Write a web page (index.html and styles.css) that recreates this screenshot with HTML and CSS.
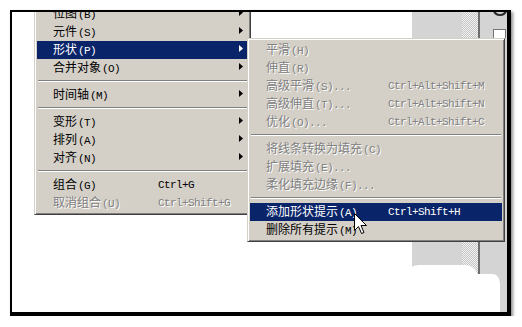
FILE: index.html
```html
<!DOCTYPE html>
<html lang="zh-CN">
<head>
<meta charset="utf-8">
<title>形状菜单</title>
<link rel="stylesheet" href="styles.css">
</head>
<body>
<div class="frame">
  <div class="stage">
    <div class="canvas"></div>
    <div class="panel">
      <div class="panel-gray"></div>
      <div class="panel-checker"></div>
      <div class="panel-line"></div>
      <div class="panel-gray rest"></div>
    </div>

    <svg class="tool-icon" width="16" height="26" viewBox="0 0 16 26">
      <path d="M2,-2 A6,5 0 0 0 14,-2" fill="none" stroke="#2a2a2a" stroke-width="2.2"/>
      <rect x="1.5" y="17.5" width="12" height="10" fill="#fff" stroke="#000" stroke-dasharray="1 1"/>
    </svg>

    <div class="menu main">
      <div class="item"><span class="label">位图<span class="acc">(B)</span></span><span class="arrow"></span></div>
      <div class="item"><span class="label">元件<span class="acc">(S)</span></span><span class="arrow"></span></div>
      <div class="item active"><span class="label">形状<span class="acc">(P)</span></span><span class="arrow"></span></div>
      <div class="item"><span class="label">合并对象<span class="acc">(O)</span></span><span class="arrow"></span></div>
      <div class="sep"></div>
      <div class="item"><span class="label">时间轴<span class="acc">(M)</span></span><span class="arrow"></span></div>
      <div class="sep"></div>
      <div class="item"><span class="label">变形<span class="acc">(T)</span></span><span class="arrow"></span></div>
      <div class="item"><span class="label">排列<span class="acc">(A)</span></span><span class="arrow"></span></div>
      <div class="item"><span class="label">对齐<span class="acc">(N)</span></span><span class="arrow"></span></div>
      <div class="sep"></div>
      <div class="item"><span class="label">组合<span class="acc">(G)</span></span><span class="key">Ctrl+G</span></div>
      <div class="item disabled"><span class="label">取消组合<span class="acc">(U)</span></span><span class="key">Ctrl+Shift+G</span></div>
    </div>

    <div class="menu sub">
      <div class="item disabled"><span class="label">平滑<span class="acc">(H)</span></span></div>
      <div class="item disabled"><span class="label">伸直<span class="acc">(R)</span></span></div>
      <div class="item disabled"><span class="label">高级平滑<span class="acc">(S)...</span></span><span class="key">Ctrl+Alt+Shift+M</span></div>
      <div class="item disabled"><span class="label">高级伸直<span class="acc">(T)...</span></span><span class="key">Ctrl+Alt+Shift+N</span></div>
      <div class="item disabled"><span class="label">优化<span class="acc">(O)...</span></span><span class="key">Ctrl+Alt+Shift+C</span></div>
      <div class="sep"></div>
      <div class="item disabled"><span class="label">将线条转换为填充<span class="acc">(C)</span></span></div>
      <div class="item disabled"><span class="label">扩展填充<span class="acc">(E)...</span></span></div>
      <div class="item disabled"><span class="label">柔化填充边缘<span class="acc">(F)...</span></span></div>
      <div class="sep"></div>
      <div class="item active"><span class="label">添加形状提示<span class="acc">(A)</span></span><span class="key">Ctrl+Shift+H</span></div>
      <div class="item"><span class="label">删除所有提示<span class="acc">(M)</span></span></div>
    </div>

    <svg class="cursor" width="13" height="22" viewBox="0 0 13 22">
      <path d="M0.5,0.5 V17.5 L4.5,13.5 L7.5,20.5 L10,19.5 L7,12.5 H12.5 Z" fill="#fff" stroke="#000" stroke-width="1" stroke-linejoin="miter"/>
    </svg>

    <svg class="cloud" width="92" height="52" viewBox="0 0 92 52">
      <path d="M0,52 V9 Q0,3 9,3 H55 Q63,3 68,12 H82 Q90,12 90,24 V52 Z" fill="#fff"/>
    </svg>
  </div>
</div>
</body>
</html>
```

FILE: styles.css
```css
html, body {
  margin: 0;
  padding: 0;
  background: #fff;
}

.frame {
  margin: 10px 0 0 10px;
  width: 495px;
  height: 300px;
  border-style: solid;
  border-color: #000;
  border-width: 2px 4px 4px 2px;
  box-shadow: 2px 2px 3px rgba(0, 0, 0, 0.45);
}

.stage {
  position: relative;
  width: 100%;
  height: 100%;
  overflow: hidden;
  display: flex;
  font-family: "Noto Sans CJK SC", "Noto Sans CJK JP", sans-serif;
  font-size: 12px;
}

.canvas {
  flex: 0 0 400px;
  background: #fff;
}

.panel {
  flex: 1;
  display: flex;
}

.panel-gray {
  flex: 0 0 50px;
  background: #d4d4d4;
}

.panel-gray.rest {
  flex: 1;
}

.panel-checker {
  flex: 0 0 16px;
  background-color: #f2f2f2;
  background-image: repeating-conic-gradient(#c4c4c4 0 25%, #f2f2f2 0 50%);
  background-size: 2px 2px;
}

.panel-line {
  flex: 0 0 2px;
  background: #6e6e6e;
}

.tool-icon {
  position: absolute;
  left: 480px;
  top: 0;
}

/* menus */
.menu {
  position: absolute;
  box-sizing: border-box;
  background: #d4d0c8;
  border: 1px solid;
  border-color: #d4d0c8 #404040 #404040 #d4d0c8;
  box-shadow: inset 1px 1px 0 #fff, inset -1px -1px 0 #808080;
  padding: 2px;
  color: #000;
}

.menu.main {
  left: 22px;
  top: -10px;
  width: 217px;
}

.menu.sub {
  left: 235px;
  top: 26px;
  width: 258px;
}

.item {
  display: flex;
  align-items: center;
  height: 18px;
  line-height: 18px;
  padding: 0 5px 0 16px;
  white-space: nowrap;
}

.main .label {
  flex: 0 0 105px;
}

.sub .label {
  flex: 0 0 122px;
}

.acc,
.key {
  font-family: "Liberation Mono", "DejaVu Sans Mono", monospace;
  font-size: 11px;
  letter-spacing: -0.6px;
}

.acc {
  margin-left: 1px;
}

.arrow {
  margin-left: auto;
  align-self: flex-start;
  margin-top: 4px;
  width: 4px;
  height: 7px;
  background: currentColor;
  clip-path: polygon(0 0, 100% 50%, 0 100%);
}

.item.active {
  background: #0a246a;
  color: #fff;
}

.item.disabled {
  color: #808080;
  text-shadow: 1px 1px 0 #fff;
}

.sep {
  height: 9px;
  box-sizing: border-box;
  padding: 3px 1px 0;
}

.sep::before {
  content: "";
  display: block;
  border-top: 1px solid #808080;
  border-bottom: 1px solid #fff;
}

.cursor {
  position: absolute;
  left: 342px;
  top: 201px;
}

.cloud {
  position: absolute;
  left: 398px;
  top: 250px;
}
```
